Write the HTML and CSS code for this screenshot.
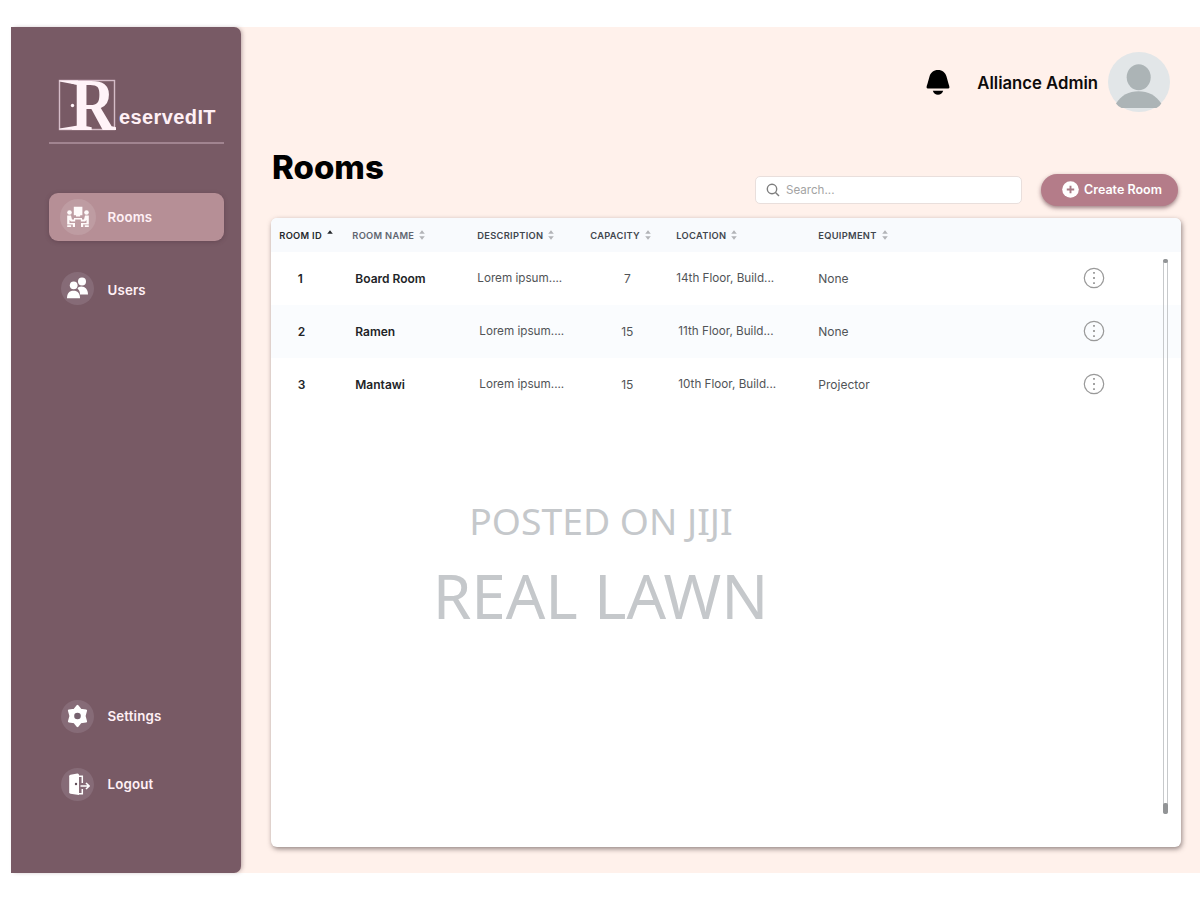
FILE: index.html
```html
<!DOCTYPE html>
<html lang="en">
<head>
<meta charset="utf-8">
<title>ReservedIT - Rooms</title>
<link rel="stylesheet" href="styles.css">
</head>
<body>
<svg width="0" height="0" class="defs">
  <defs>
    <symbol id="sort" viewBox="0 0 8 10"><path class="up" d="M4 0.300 6.800 3.800H1.200z"/><path class="down" d="M4 9.700 6.800 6.200H1.200z"/></symbol>
    <symbol id="more" viewBox="0 0 22 22"><circle cx="11" cy="11" r="9.700" fill="none" stroke="#999" stroke-width="1.200"/><path d="M10.100 5h1.800v1.800h-1.800zM10.100 10.100h1.800v1.800h-1.800zM10.100 15.200h1.800V17h-1.800z" fill="#999"/></symbol>
  </defs>
</svg>
<div class="app">
  <aside class="sidebar">
    <div class="brand">
      <svg class="logo" width="58" height="52" viewBox="0 0 58 52">
        <rect x="1.500" y="1.500" width="55" height="49" fill="none" stroke="#d5bcc8" stroke-width="1.400"/>
        <path d="M1.500 1.500H20V6L1.500 2.500z M1.500 50.500H20V46.500L1.500 49.500z" fill="#fff3f8"/>
        <circle cx="14.500" cy="26.500" r="1.700" fill="#fff3f8"/>
        <text class="logo-r" transform="translate(12.500 51) scale(.83 1)">R</text>
      </svg>
      <span class="brand-name">eservedIT</span>
    </div>
    <nav class="nav">
      <a class="item active"><span class="disc"><svg width="24" height="24" viewBox="0 0 24 24" fill="#fffafa">
        <path d="M7.800 1.800h8.600v8.400h-2.200v1.300H10v-1.300H7.800z"/><circle cx="3.500" cy="7.500" r="2.300"/><circle cx="20.500" cy="7.500" r="2.300"/>
        <path d="M1.200 10.500h3.800l1 4h3.200v2H5L3.500 15v3H9V22H6.800v-2.500H1.200zM22.800 10.500H19l-1 4h-3.200v2H19l1.500-1.500v3H15V22h2.200v-2.500h5.600zM8 13h8v1.600H8zM1.200 20.300h4V22h-4zM18.800 20.300h4V22h-4z"/></svg></span>Rooms</a>
      <a class="item users"><span class="disc"><svg width="24" height="24" viewBox="0 0 24 24" fill="#fff">
        <circle cx="16" cy="5.500" r="4"/><path d="M12 11.500C17 9 22 12 22 18.500H14c0-3-.8-4.500-2.500-5.800z"/>
        <circle cx="7.700" cy="9.300" r="4.700" fill="#866b77"/><circle cx="7.700" cy="9.300" r="3.900"/>
        <path d="M1 22.300c0-5 2.200-7.500 6.500-7.500s6.500 2.500 6.500 7.500z"/></svg></span>Users</a>
    </nav>
    <nav class="nav nav-bottom">
      <a class="item"><span class="disc"><svg width="24" height="24" viewBox="0 0 24 24">
        <path d="M11.500 2 14.500 5.800 20 6.500 18.500 12 20 17.500 14.500 18.200 11.500 22 8.500 18.200 3 17.500 4.500 12 3 6.500 8.500 5.800z" fill="#fff" stroke="#fff" stroke-width="2.200" stroke-linejoin="round"/><circle cx="11.500" cy="12" r="3.300" fill="#75616e"/></svg></span>Settings</a>
      <a class="item"><span class="disc"><svg width="24" height="24" viewBox="0 0 24 24">
        <path d="M3.200 4.300Q3.200 3 4.500 2.700L11.500 1.500Q13 1.500 13 3V23L4.500 21.700Q3.200 21.500 3.200 20.200z" fill="#fff"/><circle cx="10" cy="12" r="1.200" fill="#604d59"/>
        <path d="M13 4.300h3.300V11M13 21.700h3.300V17" fill="none" stroke="#fff" stroke-width="1.500"/><path d="M14.500 14h8M20 11l3.200 3-3.200 3" fill="none" stroke="#fff" stroke-width="1.600"/></svg></span>Logout</a>
    </nav>
  </aside>
  <main class="main">
    <header class="topbar">
      <svg class="bell" width="24" height="27" viewBox="0 0 24 27"><path d="M12 1C7.500 1 4.800 3.500 3.500 7.500L1.700 14C1.200 16 .6 16.700.6 18.200c0 1 .7 1.300 1.800 1.300h19.200c1.100 0 1.800-.3 1.800-1.300 0-1.500-.6-2.200-1.100-4.200L20.500 7.500C19.200 3.500 16.500 1 12 1zM6.800 21.800h10.400c-.9 2.600-2.700 4-5.200 4s-4.300-1.400-5.200-4z"/></svg>
      <span class="user">Alliance Admin</span>
      <svg class="avatar" width="62" height="60" viewBox="0 0 62 60"><ellipse cx="31" cy="30" rx="31" ry="30" fill="#e2e6e8"/><ellipse cx="30.700" cy="25.300" rx="12" ry="13" fill="#acb4b6"/><path d="M8 51.500C13 43.500 21 39.300 30.500 39.300S48 43.500 53.300 51.500Q51.500 54.700 48.500 56H13.500Q10 54.500 8 51.500z" fill="#acb4b6"/></svg>
    </header>
    <div class="tools">
      <h1>Rooms</h1>
      <label class="search"><svg width="14" height="14" viewBox="0 0 14 14" fill="none" stroke="#7d7d7d" stroke-width="1.400"><circle cx="6" cy="6" r="4.700"/><path d="m9.500 9.500 3.500 3.500"/></svg>Search...</label>
      <button class="create"><svg width="17" height="17" viewBox="0 0 17 17"><circle cx="8.500" cy="8.500" r="8.300" fill="#fff"/><path d="M4.800 8.500h7.400M8.500 4.800v7.400" stroke="#a77a86" stroke-width="1.900"/></svg>Create Room</button>
    </div>
    <section class="card">
      <div class="row head">
        <span class="sorted">ROOM ID<svg class="sort"><use href="#sort"/></svg></span><span>ROOM NAME<svg class="sort"><use href="#sort"/></svg></span><span class="dark">DESCRIPTION<svg class="sort"><use href="#sort"/></svg></span><span class="dark">CAPACITY<svg class="sort"><use href="#sort"/></svg></span><span class="dark">LOCATION<svg class="sort"><use href="#sort"/></svg></span><span class="dark">EQUIPMENT<svg class="sort"><use href="#sort"/></svg></span>
      </div>
      <div class="row"><b class="id">1</b><b class="name">Board Room</b><span class="trim">Lorem ipsum....</span><span class="cap">7</span><span class="trim">14th Floor, Build...</span><span>None</span><svg class="more"><use href="#more"/></svg></div>
      <div class="row alt"><b class="id">2</b><b class="name">Ramen</b><span class="trim in">Lorem ipsum....</span><span class="cap">15</span><span class="trim in">11th Floor, Build...</span><span>None</span><svg class="more"><use href="#more"/></svg></div>
      <div class="row"><b class="id">3</b><b class="name">Mantawi</b><span class="trim in">Lorem ipsum....</span><span class="cap">15</span><span class="trim in">10th Floor, Build...</span><span>Projector</span><svg class="more"><use href="#more"/></svg></div>
      <div class="scroll"><i></i><i></i></div>
    </section>
  </main>
</div>
<div class="watermark"><div class="wm-small">POSTED ON JIJI</div><div class="wm-large">REAL LAWN</div></div>
</body>
</html>
```

FILE: styles.css
```css
* { box-sizing: border-box; }
body { margin: 0; padding: 27px 0 27px 11px; height: 900px; background: #fff; font-family: Inter, sans-serif; overflow: hidden; }
.defs { position: absolute; }
.app { display: flex; height: 846px; background: #fff1eb; }
.sidebar { width: 230px; padding: 51px 17px 0 38px; background: #785a65; border-radius: 0 7px 7px 0; box-shadow: 2px 0 4px -1px rgba(80, 50, 60, .4); display: flex; flex-direction: column; color: #fff0f5; }
.brand { display: flex; width: 175px; height: 66px; padding-left: 9px; border-bottom: 2px solid #a18490; }
.logo { flex: none; margin-top: 1px; overflow: visible; }
.logo-r { font: bold 75px "Liberation Serif", serif; fill: #fff3f8; }
.brand-name { margin: 27px 0 0 3px; font: bold 20px/24px "Liberation Sans", sans-serif; letter-spacing: .4px; }
.nav { display: flex; flex-direction: column; margin-top: 49px; gap: 25px; }
.item { display: flex; align-items: center; height: 48px; padding-left: 12px; border-radius: 9px; font-size: 13.3px; font-weight: 600; gap: 13.5px; letter-spacing: .15px; }
.active { background: #b68f96; box-shadow: 0 1px 4px rgba(80, 50, 65, .45); }
.disc { display: flex; align-items: center; justify-content: center; width: 33px; height: 33px; border-radius: 50%; background: #866b77; }
.active .disc { width: 36px; height: 36px; margin: 0 -2px 0 -1px; background: #be9ca2; }
.users .disc { margin-top: -4px; }
.nav-bottom { margin-top: 378px; gap: 20px; }
.main { flex: 1; min-width: 0; padding: 25px 18px 0 30px; }
.topbar { display: flex; align-items: center; justify-content: flex-end; height: 60px; padding-right: 12px; color: #0d0b0b; }
.bell { margin-right: 27px; }
.user { font-size: 16.7px; font-weight: 600; margin: 2px 10px 0 0; }
.tools { display: flex; height: 106px; }
h1 { width: 483px; margin: 34px 0 0 1px; font-size: 33px; line-height: 42px; font-weight: 800; color: #000; }
.search { display: flex; align-items: center; gap: 6px; width: 267px; height: 28px; margin-top: 64px; padding: 0 0 1px 10px; background: #fff; border: 1px solid #e9dfdc; border-radius: 5px; font-size: 11.600px; color: #a3a3a3; }
.create { display: flex; align-items: center; gap: 5px; width: 137px; height: 32px; margin: 62px 0 0 19px; padding: 0 0 1px 21px; border: 0; border-radius: 16px; background: #b47c89; color: #fff; font: 600 12.500px Inter, sans-serif; white-space: nowrap; box-shadow: 0 2px 4px rgba(90, 50, 60, .6); }
.card { position: relative; height: 629px; width: 910px; background: #fff; border-radius: 6px; box-shadow: 1px 2px 5px rgba(75, 60, 60, .6); overflow: visible; }
.row { display: grid; grid-template-columns: 73px 125px 113px 86px 142px 266px 22px; align-items: center; height: 53px; padding-left: 8.300px; font-size: 12px; color: #515457; white-space: nowrap; }
.head { height: 34px; background: #f8fafd; border-radius: 6px 6px 0 0; font-size: 9.300px; font-weight: 600; letter-spacing: .3px; color: #606570; }
.head span { display: flex; align-items: center; }
.head .dark { color: #41464d; }
.head .sorted { color: #24272b; }
.sort { width: 8px; height: 10px; margin-left: 4px; fill: #b2b3b7; }
.sorted .sort .up, .sorted .sort { fill: #25272b; }
.sorted .sort { clip-path: inset(0 0 5px 0); }
.alt { background: #fafcfe; }
.row b { font-weight: 600; color: #222427; }
.row:not(.head) { padding-bottom: 1px; }
.trim { font-size: 11.700px; }
.id { padding-left: 18.500px; }
.name { padding-left: 3px; }
.cap { padding-right: 12px; text-align: center; }
.in { padding-left: 2px; }
.more { width: 22px; height: 22px; margin-left: -1px; }
.scroll { position: absolute; right: 13px; top: 41px; width: 5px; height: 555px; border: 1px solid #c7c9cb; border-radius: 3px; display: flex; flex-direction: column; justify-content: space-between; }
.scroll i { height: 4px; background: #929496; border-radius: 2px; margin: -1px; }
.scroll i:last-child { height: 11px; }
.watermark { position: absolute; left: 1px; top: 494px; width: 1200px; text-align: center; color: #c5c8cb; font-family: "Noto Sans", sans-serif; }
.wm-small { font-size: 37.300px; line-height: 54px; }
.wm-large { font-size: 62px; line-height: 84px; margin: 5px 0 0 -1px; }
```
